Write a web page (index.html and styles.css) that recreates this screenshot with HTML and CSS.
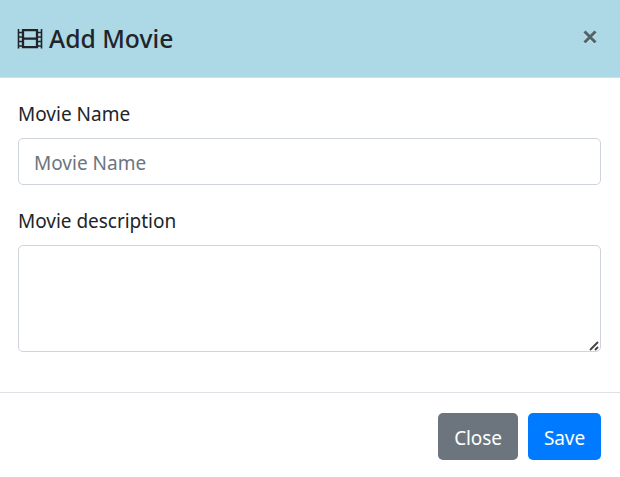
FILE: index.html
```html
<!DOCTYPE html>
<html lang="en">
<head>
<meta charset="utf-8">
<title>Add Movie</title>
<link rel="stylesheet" href="styles.css">
</head>
<body>
<form class="modal">
  <header class="modal-header">
    <svg class="film" viewBox="0 0 26 20" aria-hidden="true">
      <path d="M1.5 0V19.5M24.5 0V19.5M1.5 3.5H6M1.5 8H6M1.5 12.5H6M1.5 17H6M20 3.5H24.5M20 8H24.5M20 12.5H24.5M20 17H24.5" stroke-width="1.6"/>
      <path d="M6 1.2H20V18.2H6ZM6 9.7H20" stroke-width="2.3"/>
    </svg>
    <h1 class="title">Add Movie</h1>
    <button class="dismiss" type="button" aria-label="Dismiss">
      <svg viewBox="0 0 16 16"><path class="glow" d="M2.5 3.5L13.5 14.5M13.5 3.5L2.5 14.5"/><path d="M2.5 2.5L13.5 13.5M13.5 2.5L2.5 13.5"/></svg>
    </button>
  </header>
  <main class="modal-body">
    <label class="label name" for="name">Movie Name</label>
    <input class="control" id="name" type="text" placeholder="Movie Name">
    <label class="label description" for="description">Movie description</label>
    <div class="area">
      <textarea class="control multiline" id="description"></textarea>
      <svg class="grip" viewBox="0 0 10 10" aria-hidden="true"><path d="M1 9L9 1M6 9L9 6"/></svg>
    </div>
  </main>
  <footer class="modal-footer">
    <button class="button secondary" type="button">Close</button>
    <button class="button primary" type="button">Save</button>
  </footer>
</form>
</body>
</html>
```
FILE: styles.css
```css
* { box-sizing: border-box; }
body {
  margin: 0;
  background: #fff;
  color: #212529;
  font-family: "Noto Sans", "Open Sans", sans-serif;
  font-size: 19px;
}
.modal { display: flex; flex-direction: column; height: 477px; }
.modal-header {
  display: flex;
  align-items: flex-start;
  height: 78px;
  padding: 0 22px 0 17px;
  background: #add8e6;
  border-bottom: 1px solid #cfdfe6;
}
.film { width: 26px; height: 20px; margin-top: 29px; fill: none; stroke: #212529; }
.title {
  flex: 1;
  margin: 21px 0 0 6px;
  font-size: 24.7px;
  font-weight: 500;
  line-height: 36px;
}
.dismiss { margin-top: 29px; padding: 0; border: 0; background: none; height: 16px; }
.dismiss svg { display: block; width: 16px; height: 16px; fill: none; stroke: #536468; stroke-width: 3; }
.dismiss .glow { stroke: #d6ebf2; }
.modal-body { display: flex; flex-direction: column; height: 314px; padding: 21px 19px 0 18px; }
.label { height: 30px; line-height: 30px; white-space: nowrap; }
.control {
  display: block;
  width: 100%;
  height: 47px;
  margin: 9px 0 0;
  padding: 3px 15px 0;
  border: 1px solid #ced4da;
  border-radius: 5px;
  background: #fff;
  font: inherit;
  color: #495057;
}
.control::placeholder { color: #6c757d; opacity: 1; }
.description { margin-top: 21px; letter-spacing: -0.03px; }
.area { position: relative; }
.multiline { height: 107px; resize: none; }
.grip { position: absolute; right: 2px; bottom: 1px; width: 10px; height: 10px; fill: none; stroke: #444; stroke-width: 1.9; }
.modal-footer {
  display: flex;
  justify-content: flex-end;
  gap: 10px;
  height: 85px;
  padding: 20px 19px 0 0;
  border-top: 1px solid #dee2e6;
}
.button {
  height: 47px;
  padding: 3px 0 0;
  border: 0;
  border-radius: 5px;
  color: #fff;
  font: inherit;
  letter-spacing: -0.1px;
}
.secondary { width: 80px; background: #6c757d; }
.primary { width: 73px; background: #007bff; }
```
